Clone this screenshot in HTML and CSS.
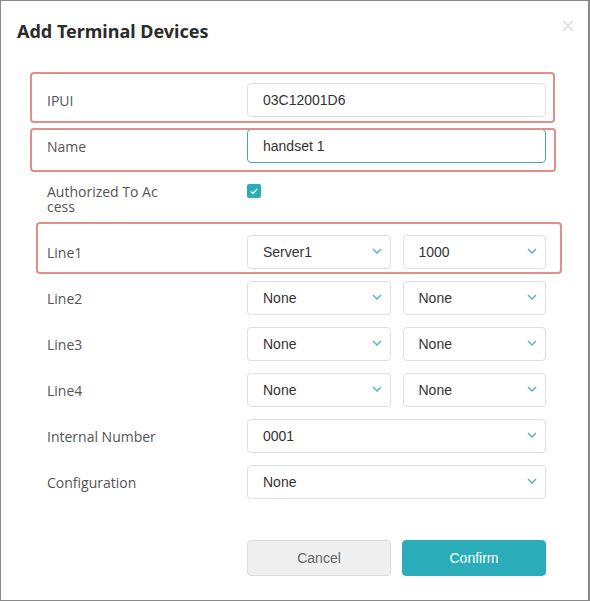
FILE: index.html
```html
<!DOCTYPE html>
<html lang="en">
<head>
<meta charset="utf-8">
<title>Add Terminal Devices</title>
<link rel="stylesheet" href="styles.css">
</head>
<body>
<div class="dialog">
  <div class="header">
    <h1 class="title">Add Terminal Devices</h1>
    <svg class="close" width="12" height="12" viewBox="0 0 12 12"><path d="M1 1L11 11M11 1L1 11" stroke="#dcdcdc" stroke-width="1.4" fill="none"/></svg>
  </div>
  <div class="form">
    <div class="row">
      <div class="label">IPUI</div>
      <div class="control"><div class="input">03C12001D6</div></div>
      <div class="mark mark-ipui"></div>
    </div>
    <div class="row">
      <div class="label">Name</div>
      <div class="control"><div class="input input-focus">handset 1</div></div>
      <div class="mark mark-name"></div>
    </div>
    <div class="row row-check">
      <div class="label"><span class="wrap">Authorized To Access</span></div>
      <div class="control">
        <div class="checkbox"><svg width="14" height="14" viewBox="0 0 14 14"><path d="M3.8 7.2L6 9.3L10.3 4.9" stroke="#fff" stroke-width="1.3" fill="none"/></svg></div>
      </div>
    </div>
    <div class="row">
      <div class="label">Line1</div>
      <div class="control pair">
        <div class="select"><span>Server1</span><svg class="chev" width="10" height="6" viewBox="0 0 10 6"><path d="M1 1L5 5L9 1" stroke="#5ab6bf" stroke-width="1.5" fill="none"/></svg></div>
        <div class="select"><span>1000</span><svg class="chev" width="10" height="6" viewBox="0 0 10 6"><path d="M1 1L5 5L9 1" stroke="#5ab6bf" stroke-width="1.5" fill="none"/></svg></div>
      </div>
      <div class="mark mark-line1"></div>
    </div>
    <div class="row">
      <div class="label">Line2</div>
      <div class="control pair">
        <div class="select"><span>None</span><svg class="chev" width="10" height="6" viewBox="0 0 10 6"><path d="M1 1L5 5L9 1" stroke="#5ab6bf" stroke-width="1.5" fill="none"/></svg></div>
        <div class="select"><span>None</span><svg class="chev" width="10" height="6" viewBox="0 0 10 6"><path d="M1 1L5 5L9 1" stroke="#5ab6bf" stroke-width="1.5" fill="none"/></svg></div>
      </div>
    </div>
    <div class="row">
      <div class="label">Line3</div>
      <div class="control pair">
        <div class="select"><span>None</span><svg class="chev" width="10" height="6" viewBox="0 0 10 6"><path d="M1 1L5 5L9 1" stroke="#5ab6bf" stroke-width="1.5" fill="none"/></svg></div>
        <div class="select"><span>None</span><svg class="chev" width="10" height="6" viewBox="0 0 10 6"><path d="M1 1L5 5L9 1" stroke="#5ab6bf" stroke-width="1.5" fill="none"/></svg></div>
      </div>
    </div>
    <div class="row">
      <div class="label">Line4</div>
      <div class="control pair">
        <div class="select"><span>None</span><svg class="chev" width="10" height="6" viewBox="0 0 10 6"><path d="M1 1L5 5L9 1" stroke="#5ab6bf" stroke-width="1.5" fill="none"/></svg></div>
        <div class="select"><span>None</span><svg class="chev" width="10" height="6" viewBox="0 0 10 6"><path d="M1 1L5 5L9 1" stroke="#5ab6bf" stroke-width="1.5" fill="none"/></svg></div>
      </div>
    </div>
    <div class="row">
      <div class="label">Internal Number</div>
      <div class="control">
        <div class="select"><span>0001</span><svg class="chev" width="10" height="6" viewBox="0 0 10 6"><path d="M1 1L5 5L9 1" stroke="#5ab6bf" stroke-width="1.5" fill="none"/></svg></div>
      </div>
    </div>
    <div class="row">
      <div class="label">Configuration</div>
      <div class="control">
        <div class="select"><span>None</span><svg class="chev" width="10" height="6" viewBox="0 0 10 6"><path d="M1 1L5 5L9 1" stroke="#5ab6bf" stroke-width="1.5" fill="none"/></svg></div>
      </div>
    </div>
  </div>
  <div class="footer">
    <button class="btn btn-cancel">Cancel</button>
    <button class="btn btn-confirm">Confirm</button>
  </div>
</div>
</body>
</html>
```

FILE: styles.css
```css
* { box-sizing: border-box; }
html, body { margin: 0; padding: 0; background: #fff; }
.dialog {
  width: 590px;
  height: 601px;
  border: 1px solid #8a8a8a;
  border-right-width: 2px;
  background: #fff;
  display: flex;
  flex-direction: column;
}
.header {
  display: flex;
  justify-content: space-between;
  align-items: flex-start;
  padding: 18px 14px 0 16px;
}
.title {
  margin: 0;
  font-family: "Noto Sans", "Liberation Sans", sans-serif;
  font-weight: 700;
  font-size: 18px;
  line-height: 24px;
  color: #2b2b2b;
}
.close { margin-top: 1px; }
.form {
  display: flex;
  flex-direction: column;
  gap: 12px;
  padding: 0 42px 0 46px;
  margin-top: 40px;
}
.row {
  position: relative;
  display: flex;
  align-items: center;
  min-height: 34px;
}
.label {
  width: 200px;
  flex: none;
  font-family: "Open Sans", "Liberation Sans", sans-serif;
  font-size: 14px;
  line-height: 15px;
  color: #555;
}
.wrap {
  display: block;
  width: 113px;
  word-break: break-all;
}
.control {
  flex: 1;
  min-width: 0;
}
.pair {
  display: flex;
  gap: 12px;
}
.input, .select {
  height: 34px;
  border: 1px solid #dcdfe6;
  border-radius: 4px;
  padding: 0 0 0 15px;
  font-family: "Liberation Sans", Arial, sans-serif;
  font-size: 14px;
  color: #333;
  display: flex;
  align-items: center;
  background: #fff;
}
.input-focus { border-color: #4aa8b0; }
.select {
  flex: 1;
  justify-content: space-between;
  padding-right: 8px;
}
.chev { flex: none; margin-top: -2px; }
.row-check {
  align-items: flex-start;
  padding: 9px 0 9px;
}
.checkbox {
  width: 14px;
  height: 14px;
  border-radius: 2px;
  background: #2aadb8;
  display: flex;
}
.mark {
  position: absolute;
  border: 2px solid #e28e89;
  border-radius: 4px;
  pointer-events: none;
}
.mark-ipui { left: -17px; right: -9px; top: -11px; bottom: -6px; }
.mark-name { left: -17px; right: -10px; top: -1px; bottom: -9px; }
.mark-line1 { left: -11px; right: -16px; top: -13px; bottom: -5px; }
.footer {
  display: flex;
  gap: 11px;
  padding-left: 246px;
  margin-top: 41px;
}
.btn {
  width: 144px;
  height: 36px;
  border-radius: 4px;
  font-family: "Liberation Sans", Arial, sans-serif;
  font-size: 14px;
  cursor: pointer;
}
.btn-cancel {
  background: #efefef;
  border: 1px solid #dcdcdc;
  color: #666;
}
.btn-confirm {
  background: #2aadb8;
  border: 1px solid #2aadb8;
  color: #fff;
}
```
